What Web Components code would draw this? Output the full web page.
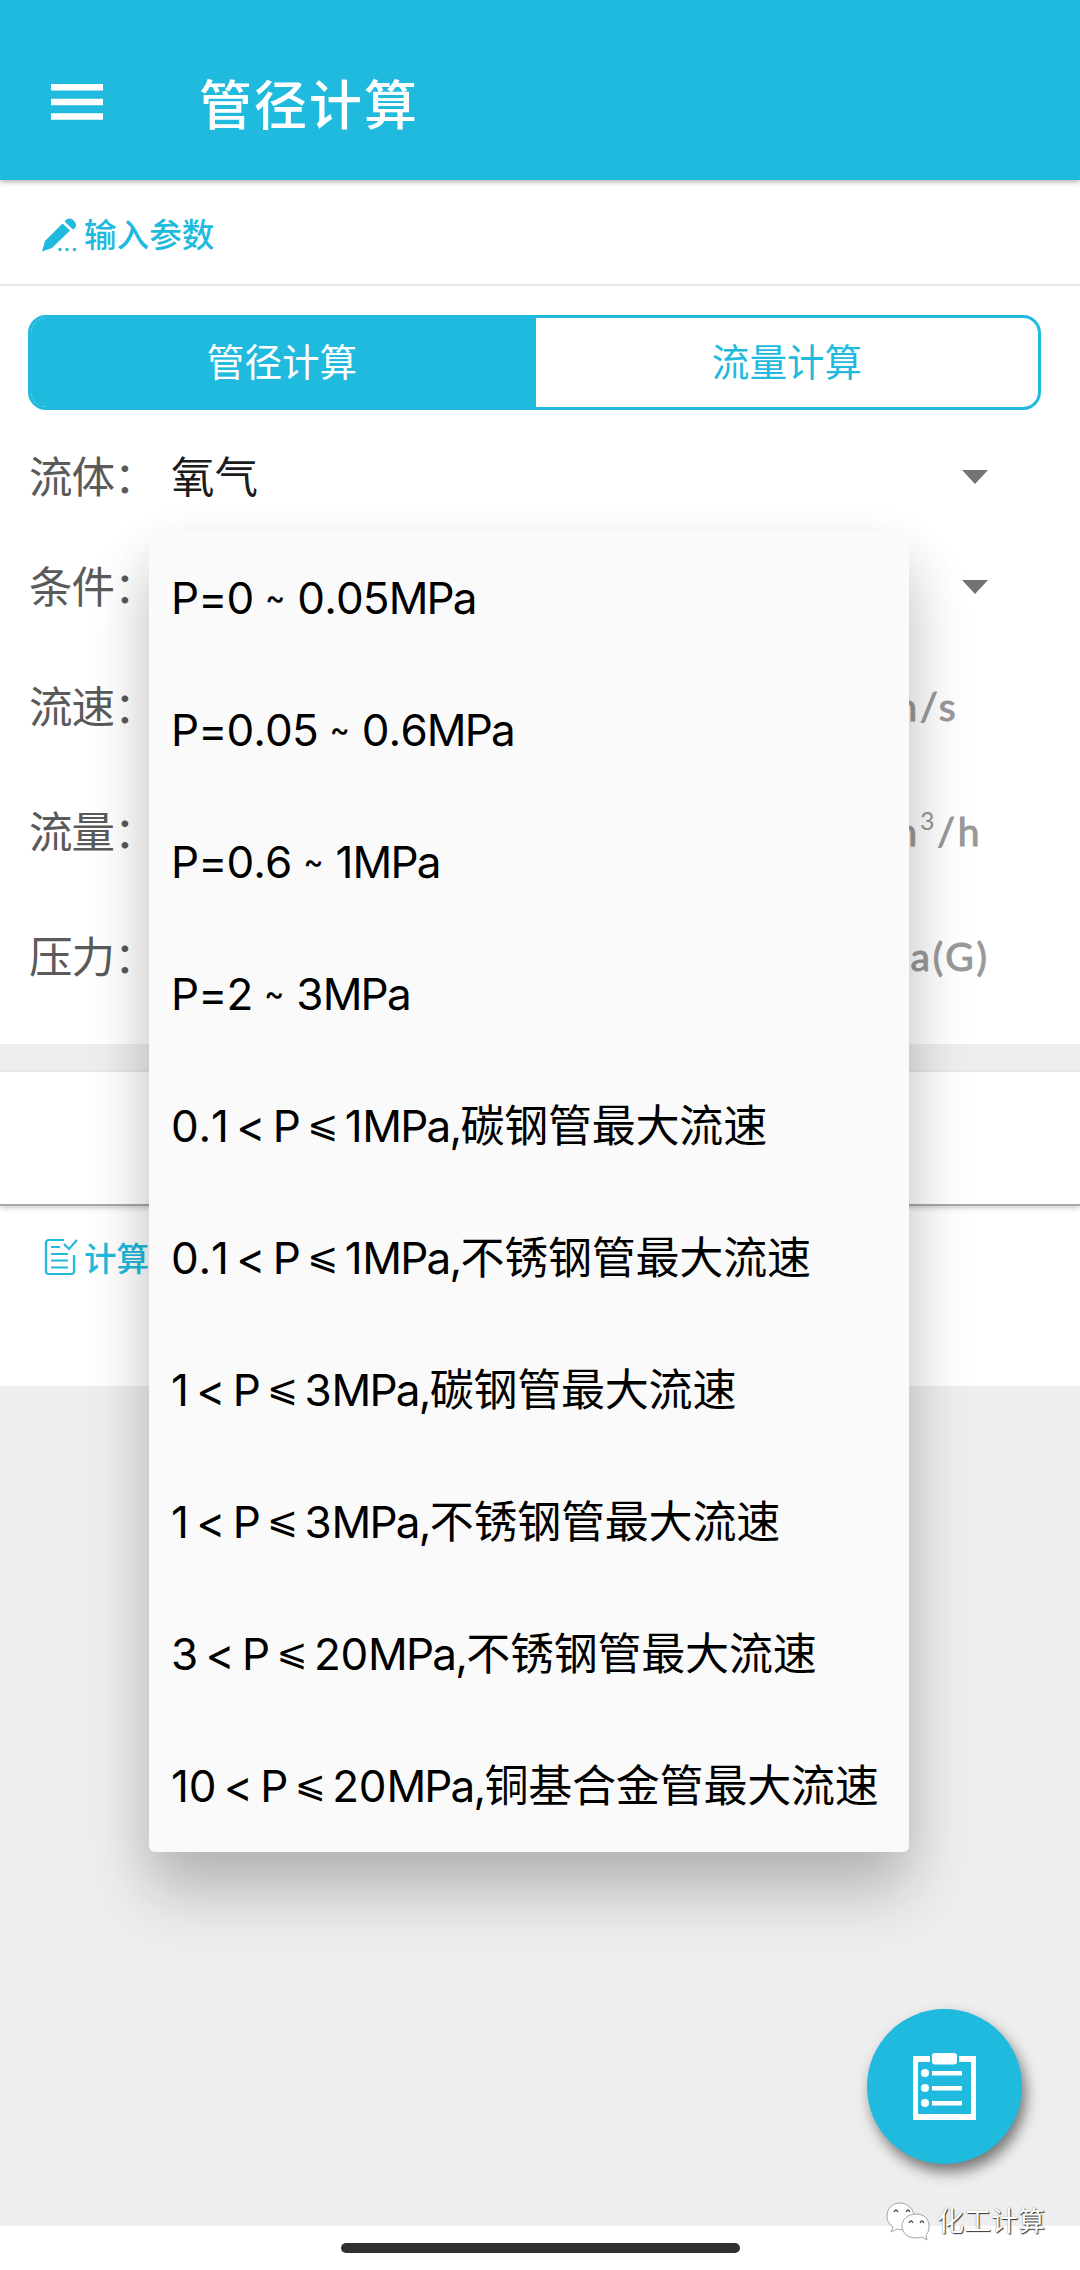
<!DOCTYPE html>
<html lang="zh-CN">
<head>
<meta charset="utf-8">
<title>管径计算</title>
<style>
  :root {
    --clr-primary: #1fbadd;
    --clr-band: #eeeeee;
    --clr-label: #5a5a5a;
  }
  * { box-sizing: border-box; }
  body {
    margin: 0;
    width: 1080px;
    height: 2270px;
    overflow: hidden;
    background: #fff;
    font-family: Inter, "Noto Sans CJK SC", sans-serif;
  }
</style>
</head>
<body>
<calc-app></calc-app>

<script>
function define(name, html) {
  const template = document.createElement("template");
  template.innerHTML = html;
  customElements.define(name, class extends HTMLElement {
    constructor() {
      super()
        .attachShadow({mode: "open"})
        .append(template.content.cloneNode(true));
    }
  });
}

define("app-header", `
  <style>
    :host {
      display: flex;
      align-items: center;
      gap: 96px;
      height: 180px;
      padding: 23px 0 0 51px;
      box-sizing: border-box;
      background: var(--clr-primary);
      box-shadow: 0 2px 5px rgba(0,0,0,.3);
      position: relative;
      color: #fff;
    }
    svg { display: block; }
    h1 {
      margin: 0;
      font-size: 53px;
      font-weight: 500;
      letter-spacing: 2px;
      line-height: 60px;
      margin-top: 8px;
    }
  </style>
  <svg width="52" height="36" viewBox="0 0 52 36" fill="#fff">
    <path d="M0 0h52v6.500H0zM0 14.700h52v6.500H0zM0 29.300h52v6.500H0z"/>
  </svg>
  <h1><slot></slot></h1>
`);

define("section-title", `
  <style>
    :host {
      display: flex;
      align-items: center;
      height: 104px;
      padding: 5px 0 0 42px;
      box-sizing: border-box;
      color: var(--clr-primary);
      font-size: 32.600px;
      font-weight: 500;
      line-height: 40px;
    }
    ::slotted(svg) { display: block; flex: none; }
  </style>
  <slot name="icon"></slot>
  <span><slot></slot></span>
`);

define("tab-bar", `
  <style>
    :host {
      display: flex;
      height: 95px;
      margin: 29px 39px 0 28px;
      box-sizing: border-box;
      border: 3px solid var(--clr-primary);
      border-radius: 18px;
      overflow: hidden;
    }
  </style>
  <slot></slot>
`);

define("tab-item", `
  <style>
    :host {
      flex: 1;
      display: flex;
      align-items: center;
      justify-content: center;
      font-size: 37.600px;
      line-height: 50px;
      color: var(--clr-primary);
    }
    :host([active]) { background: var(--clr-primary); color: #fff; padding-right: 3px; }
  </style>
  <slot></slot>
`);

define("form-row", `
  <style>
    :host {
      display: flex;
      align-items: center;
      position: relative;
      height: 125px;
      padding-left: 29px;
      box-sizing: border-box;
      font-size: 43.500px;
      line-height: 60px;
    }
    :host([select]) { height: 110px; }
    label { width: 142px; color: var(--clr-label); letter-spacing: -1px; }
    .value { flex: 1; color: #1c1c1c; }
    .arrow {
      display: none;
      margin-right: 92px;
      border: 13px solid transparent;
      border-top: 14px solid #737373;
      border-bottom: 0;
    }
    :host([select]) .arrow { display: block; }
    .unit {
      width: 195px;
      padding-bottom: 2px;
      color: #999;
      font-size: 39px;
      letter-spacing: 2.800px;
      -webkit-text-stroke: 1px #999;
      font-family: Lato, Inter, sans-serif;
    }
    :host([select]) .unit { display: none; }
  </style>
  <label><slot name="label"></slot></label>
  <span class="value"><slot></slot></span>
  <span class="unit"><slot name="unit"></slot></span>
  <i class="arrow"></i>
  <slot name="menu"></slot>
`);

define("drop-menu", `
  <style>
    :host {
      display: block;
      position: absolute;
      z-index: 5;
      top: 0;
      left: 149px;
      width: 760px;
      background: #fafafa;
      border-radius: 6px;
      box-shadow: 0 42px 64px rgba(0,0,0,.2), 0 16px 52px rgba(0,0,0,.08);
    }
  </style>
  <slot></slot>
`);

define("menu-item", `
  <style>
    :host {
      display: flex;
      align-items: center;
      height: 132px;
      padding-left: 22px;
      box-sizing: border-box;
      white-space: nowrap;
      color: #000;
      font-size: 44px;
      line-height: 60px;
      letter-spacing: -.2px;
      font-kerning: none;
    }
    :host([range]) { letter-spacing: -.9px; }
  </style>
  <div><slot></slot></div>
`);

// operator glyph set in a full em box
define("math-op", `
  <style>
    :host {
      display: inline-block;
      width: 44px;
      line-height: 1;
      text-align: center;
      letter-spacing: 0;
    }
    :host([tilde]) {
      font-size: 30px;
      font-weight: 500;
      vertical-align: 6px;
    }
    :host([le]) {
      font-family: "DejaVu Sans", sans-serif;
      font-size: 37px;
      vertical-align: 5px;
    }
  </style>
  <slot></slot>
`);

define("result-panel", `
  <style>
    :host { display: block; border-top: 28px solid var(--clr-band); }
    .actions {
      height: 134px;
      border-bottom: 2px solid #a8a8a8;
      box-sizing: border-box;
      box-shadow: 0 2px 5px rgba(0,0,0,.2);
    }
    .result { height: 180px; }
  </style>
  <div class="actions"></div>
  <div class="result"><slot></slot></div>
`);

define("fab-button", `
  <style>
    :host {
      flex: none;
      display: flex;
      align-items: center;
      justify-content: center;
      width: 155px;
      height: 155px;
      border-radius: 50%;
      background: var(--clr-primary);
      box-shadow: 4px 8px 14px rgba(0,0,0,.5);
    }
    svg { display: block; }
  </style>
  <svg width="63" height="67" viewBox="0 0 63 67" fill="#fff">
    <path d="M0 3h17v6H5v52h53V9H46V3h17v64H0z"/>
    <rect x="19" y="0" width="25" height="11.500" rx="3"/>
    <circle cx="12" cy="20" r="4"/><circle cx="12" cy="35" r="4"/><circle cx="12" cy="50" r="4"/>
    <path d="M19 18h30v4.500H19zM19 33h30v4.500H19zM19 48h30v4.500H19z"/>
  </svg>
`);

define("account-mark", `
  <style>
    :host {
      display: flex;
      align-items: center;
      gap: 7px;
      color: #fff;
      font-size: 27px;
      line-height: 36px;
      text-shadow: 1px 1px 1px #333, 0 0 1px #777;
    }
    svg { display: block; }
  </style>
  <svg width="44" height="39" viewBox="0 0 44 39" fill="#fff" stroke="#999" stroke-width=".9">
    <path d="M14 1C6 1 1 7 1 14c0 5 2 8 6 11l-2 5 6-3c3 1 6 1 9 0 6-2 8-8 8-13C28 7 21 1 14 1z"/>
    <path d="M30 12c-8 0-14 5-14 12s6 12 14 12c2 0 4 0 6-1l5 3-1-5c2-2 3-5 3-9 0-7-5-12-13-12z"/>
    <g fill="none" stroke="#555" stroke-width="1.300"><path d="M8 10q2-4 4 0M20 10q2-4 4 0M23 21q2-4 4 0M34 21q2-4 4 0"/></g>
  </svg>
  <span><slot></slot></span>
`);

define("calc-app", `
  <style>
    :host { display: flex; flex-direction: column; height: 2270px; position: relative; }
    .params { height: 864px; box-sizing: border-box; }
    .divider { height: 2px; background: #e6e6e6; }
    .rows { padding-top: 12px; }
    .gap { height: 2px; }
    .mpa { letter-spacing: -1.800px; }
    .rest {
      height: 840px;
      background: var(--clr-band);
      display: flex;
      flex-direction: column;
      align-items: flex-end;
    }
    .result-title { height: 101px; }
    fab-button { margin: 623px 58px 0 0; }
    account-mark { margin: 38px 35px 0 0; }
    footer { flex: 1; display: flex; align-items: center; justify-content: center; }
    .pill { width: 399px; height: 10px; border-radius: 5px; background: #303030; }
    .check { margin-top: -4px; }
    sup { font-size: 25px; line-height: 0; vertical-align: 16px; -webkit-text-stroke: 0; }
  </style>
  <app-header>管径计算</app-header>
  <section class="params">
    <section-title>
      <svg slot="icon" width="42" height="34" viewBox="0 0 42 34" fill="#1fbadd">
        <path d="M0 33.500l3-10.500L20.500 5.500l7.500 7L10 30z"/>
        <path d="M22.500 3.500l2-2q3-2 6 0l2.500 2.500q2 3 0 6l-2 1.500z"/>
        <circle cx="18" cy="31.500" r="1.700"/><circle cx="25" cy="31.500" r="1.700"/><circle cx="32.500" cy="31.500" r="1.700"/>
      </svg>
      输入参数
    </section-title>
    <div class="divider"></div>
    <tab-bar>
      <tab-item active>管径计算</tab-item>
      <tab-item>流量计算</tab-item>
    </tab-bar>
    <div class="rows">
      <form-row select><span slot="label">流体：</span>氧气</form-row>
      <form-row select>
        <span slot="label">条件：</span>
        <drop-menu slot="menu">
          <menu-item range>P=0<math-op tilde> ~ </math-op>0.05<span class="mpa">MPa</span></menu-item>
          <menu-item range>P=0.05<math-op tilde> ~ </math-op>0.6<span class="mpa">MPa</span></menu-item>
          <menu-item range>P=0.6<math-op tilde> ~ </math-op>1<span class="mpa">MPa</span></menu-item>
          <menu-item range>P=2<math-op tilde> ~ </math-op>3<span class="mpa">MPa</span></menu-item>
          <menu-item>0.1<math-op>&lt;</math-op>P<math-op le>⩽</math-op>1<span class="mpa">MPa,</span>碳钢管最大流速</menu-item>
          <menu-item>0.1<math-op>&lt;</math-op>P<math-op le>⩽</math-op>1<span class="mpa">MPa,</span>不锈钢管最大流速</menu-item>
          <menu-item>1<math-op>&lt;</math-op>P<math-op le>⩽</math-op>3<span class="mpa">MPa,</span>碳钢管最大流速</menu-item>
          <menu-item>1<math-op>&lt;</math-op>P<math-op le>⩽</math-op>3<span class="mpa">MPa,</span>不锈钢管最大流速</menu-item>
          <menu-item>3<math-op>&lt;</math-op>P<math-op le>⩽</math-op>20<span class="mpa">MPa,</span>不锈钢管最大流速</menu-item>
          <menu-item>10<math-op>&lt;</math-op>P<math-op le>⩽</math-op>20<span class="mpa">MPa,</span>铜基合金管最大流速</menu-item>
        </drop-menu>
      </form-row>
      <div class="gap"></div>
      <form-row><span slot="label">流速：</span><span slot="unit">m/s</span></form-row>
      <form-row><span slot="label">流量：</span><span slot="unit">m<sup>3</sup>/h</span></form-row>
      <form-row><span slot="label">压力：</span><span slot="unit">Pa(G)</span></form-row>
    </div>
  </section>
  <result-panel>
    <section-title class="result-title">
      <svg slot="icon" class="check" width="42" height="38" viewBox="0 0 42 38" fill="none" stroke="#1fbadd" stroke-width="2.200">
        <path d="M22 2H7Q4 2 4 5v28q0 3 3 3h22q3 0 3-3V17M9 9h9M9 16h17M9 22.500h17M9 29.500h17M22 6l5 5 8-9"/>
      </svg>
      计算
    </section-title>
  </result-panel>
  <div class="rest">
    <fab-button></fab-button>
    <account-mark>化工计算</account-mark>
  </div>
  <footer><div class="pill"></div></footer>
`);
</script>
</body>
</html>
